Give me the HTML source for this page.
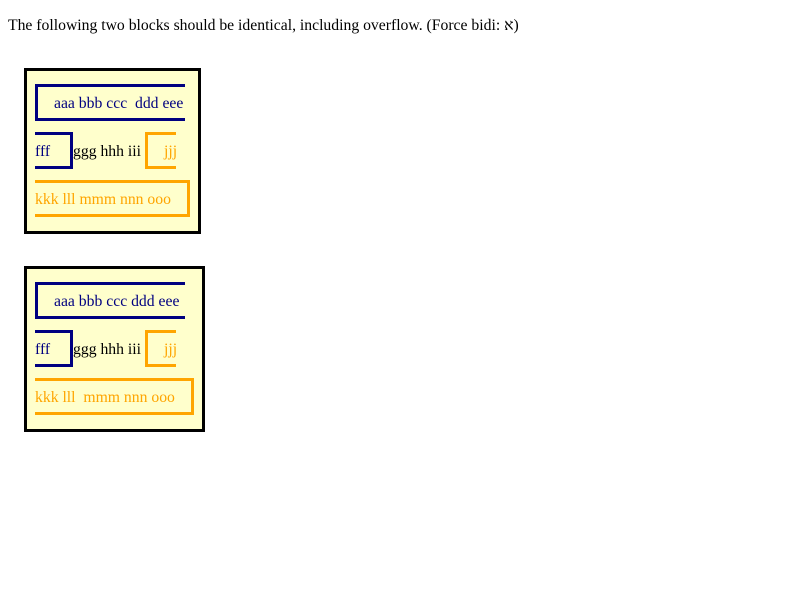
<!DOCTYPE html>
<html><head><meta charset="utf-8"><style>
body{margin:0;background:#fff;font-family:"Liberation Serif",serif;font-size:15.7px;}
.a{position:absolute;box-sizing:border-box;white-space:pre;line-height:33px;}
.outer{position:absolute;box-sizing:border-box;border:3px solid #000;background:#ffffcc;}
.n{color:#000080;border-color:#000080;border-style:solid;border-width:3px;}
.o{color:#ffa500;border-color:#ffa500;border-style:solid;border-width:3px;}
.t{position:absolute;white-space:pre;line-height:33px;}
</style></head><body>
<div class="t" style="left:8px;top:10px;line-height:32px;">The following two blocks should be identical, including overflow. (Force bidi: א)</div>

<div class="outer" style="left:24px;top:68px;width:177px;height:166px;"></div>
<div class="a n" style="left:35px;top:84px;width:150px;height:37px;border-right:0;padding-left:16px;">aaa bbb ccc  ddd eee</div>
<div class="a n" style="left:35px;top:132px;width:38px;height:37px;border-left:0;">fff</div>
<div class="t" style="left:73px;top:135px;">ggg hhh iii</div>
<div class="a o" style="left:145px;top:132px;width:31px;height:37px;border-right:0;padding-left:16px;">jjj</div>
<div class="a o" style="left:35px;top:180px;width:155px;height:37px;border-left:0;">kkk lll mmm nnn ooo</div>

<div class="outer" style="left:24px;top:266px;width:181px;height:166px;"></div>
<div class="a n" style="left:35px;top:282px;width:150px;height:37px;border-right:0;padding-left:16px;">aaa bbb ccc ddd eee</div>
<div class="a n" style="left:35px;top:330px;width:38px;height:37px;border-left:0;">fff</div>
<div class="t" style="left:73px;top:333px;">ggg hhh iii</div>
<div class="a o" style="left:145px;top:330px;width:31px;height:37px;border-right:0;padding-left:16px;">jjj</div>
<div class="a o" style="left:35px;top:378px;width:159px;height:37px;border-left:0;">kkk lll  mmm nnn ooo</div>
</body></html>
